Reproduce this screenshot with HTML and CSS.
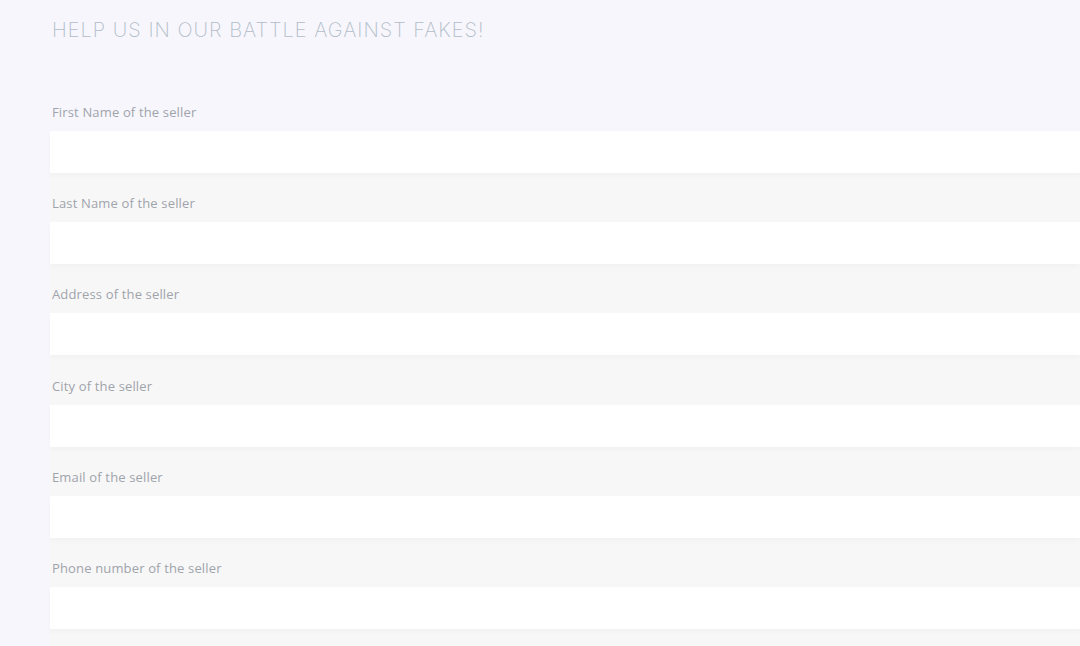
FILE: index.html
```html
<!DOCTYPE html>
<html lang="en">
<head>
  <meta charset="UTF-8">
  <meta name="viewport" content="width=device-width, initial-scale=1.0">
  <title>Report a seller</title>
  <link rel="stylesheet" href="styles.css">
</head>
<body>
  <h1 class="title">Help us in our battle against fakes!</h1>
  <form class="report-form">
    <div class="field">
      <label for="first-name">First Name of the seller</label>
      <input type="text" id="first-name">
    </div>
    <div class="field">
      <label for="last-name">Last Name of the seller</label>
      <input type="text" id="last-name">
    </div>
    <div class="field">
      <label for="address">Address of the seller</label>
      <input type="text" id="address">
    </div>
    <div class="field">
      <label for="city">City of the seller</label>
      <input type="text" id="city">
    </div>
    <div class="field">
      <label for="email">Email of the seller</label>
      <input type="email" id="email">
    </div>
    <div class="field">
      <label for="phone">Phone number of the seller</label>
      <input type="tel" id="phone">
    </div>
  </form>
</body>
</html>
```

FILE: styles.css
```css
* {
  margin: 0;
  padding: 0;
  box-sizing: border-box;
}

body {
  font-family: "Open Sans", Arial, sans-serif;
  background-color: #f7f6fd;
  overflow: hidden;
}

.title {
  font-family: Inter, "DejaVu Sans", sans-serif;
  font-weight: 200;
  font-size: 20px;
  line-height: 24px;
  letter-spacing: 1px;
  text-transform: uppercase;
  color: #b2bdc8;
  padding: 18px 0 0 52px;
}

.report-form {
  margin: 61px 0 0 50px;
  /* the strip under the first input turns grey */
  background: linear-gradient(to bottom, transparent 70px, #f7f7f8 70px);
}

.field {
  padding: 0 0 21.2px 2px;
}

.field label {
  display: block;
  font-size: 13px;
  line-height: 18px;
  letter-spacing: 0.15px;
  color: #a0a4aa;
  margin-bottom: 10px;
}

.field input {
  display: block;
  width: calc(100% + 2px);
  height: 42px;
  margin-left: -2px;
  border: none;
  background-color: #fff;
  box-shadow: 0 3px 5px rgba(0, 0, 0, 0.025);
  outline: none;
}
```
